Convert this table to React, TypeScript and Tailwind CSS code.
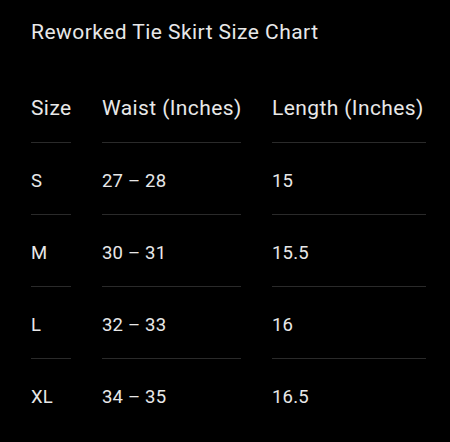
import React from "react";

const rows = [
  ["S", "27 – 28", "15"],
  ["M", "30 – 31", "15.5"],
  ["L", "32 – 33", "16"],
  ["XL", "34 – 35", "16.5"],
];

export default function App() {
  const font = { fontFamily: "Roboto, 'Open Sans', sans-serif" };
  return (
    <div className="w-[450px] h-[442px] bg-black text-[#e8e8e8] overflow-hidden pl-[31px]" style={font}>
      <div className="pt-[18px] h-[46px] text-[21px] leading-[28px] tracking-[0.45px] whitespace-nowrap">Reworked Tie Skirt Size Chart</div>
      <div className="mt-[25px] grid grid-cols-[40px_139px_154px] gap-x-[31px]">
        {["Size", "Waist (Inches)", "Length (Inches)"].map((h) => (
          <div key={h} className="h-[72px] pt-[5px] flex items-center border-b border-[#2a2a2a] text-[21px] tracking-[0.4px] whitespace-nowrap">
            {h}
          </div>
        ))}
        {rows.map((r, i) =>
          r.map((c, j) => (
            <div
              key={`${i}-${j}`}
              className={`h-[72px] pt-[6px] flex items-center text-[18.5px] tracking-[0.2px] whitespace-nowrap ${i < rows.length - 1 ? "border-b border-[#2a2a2a]" : ""}`}
            >
              {c}
            </div>
          ))
        )}
      </div>
    </div>
  );
}
